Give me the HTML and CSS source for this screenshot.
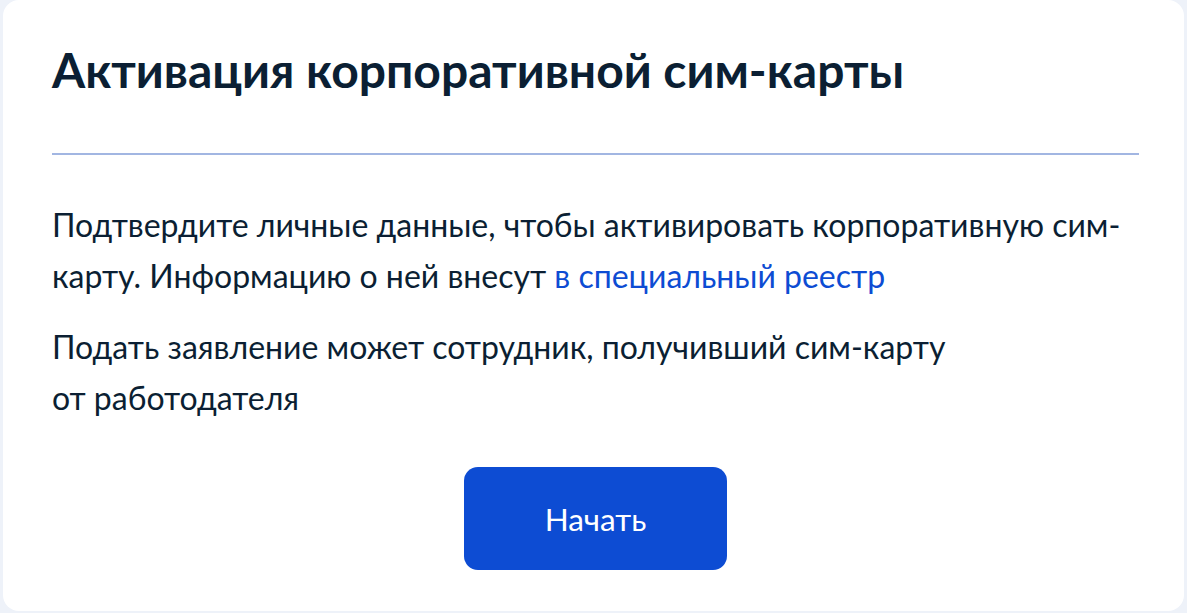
FILE: index.html
```html
<!DOCTYPE html>
<html lang="ru">
<head>
<meta charset="utf-8">
<link rel="stylesheet" href="styles.css">
<title>Активация корпоративной сим-карты</title>
</head>
<body>
<main class="card">
  <h1 class="title">Активация корпоративной сим-карты</h1>
  <hr class="divider">
  <p class="text text-first">Подтвердите личные данные, чтобы активировать корпоративную сим-карту. Информацию о ней внесут <a class="link" href="#">в специальный реестр</a></p>
  <p class="text text-second">Подать заявление может сотрудник, получивший сим-карту <br>от работодателя</p>
  <div class="actions">
    <button class="btn" type="button">Начать</button>
  </div>
</main>
</body>
</html>
```

FILE: styles.css
```css
html, body {
  margin: 0;
  padding: 0;
}
body {
  background: #eef2f9;
  font-family: Lato, "Noto Sans", sans-serif;
  color: #0b1f33;
  padding: 0 3px 2px 3px;
  height: 613px;
  box-sizing: border-box;
  overflow: hidden;
}
.card {
  background: #ffffff;
  border-radius: 16px;
  height: 611px;
  box-sizing: border-box;
  padding: 41px 45px 0 49px;
  display: flex;
  flex-direction: column;
}
.title {
  margin: 0;
  font-size: 48px;
  line-height: 58px;
  font-weight: 700;
}
.divider {
  border: 0;
  height: 2px;
  background: #a2b6e2;
  margin: 54px 0 0 0;
  flex-shrink: 0;
}
.text {
  margin: 0;
  font-size: 32px;
  line-height: 51px;
}
.text-first {
  margin-top: 44px;
}
.text-second {
  margin-top: 20px;
}
.link {
  color: #0d4cd3;
  text-decoration: none;
}
.actions {
  display: flex;
  justify-content: center;
  margin-top: 44px;
}
.btn {
  width: 263px;
  height: 103px;
  border: 0;
  border-radius: 14px;
  background: #0d4cd3;
  color: #ffffff;
  font-family: Lato, "Noto Sans", sans-serif;
  font-size: 31.5px;
  cursor: pointer;
}
```
